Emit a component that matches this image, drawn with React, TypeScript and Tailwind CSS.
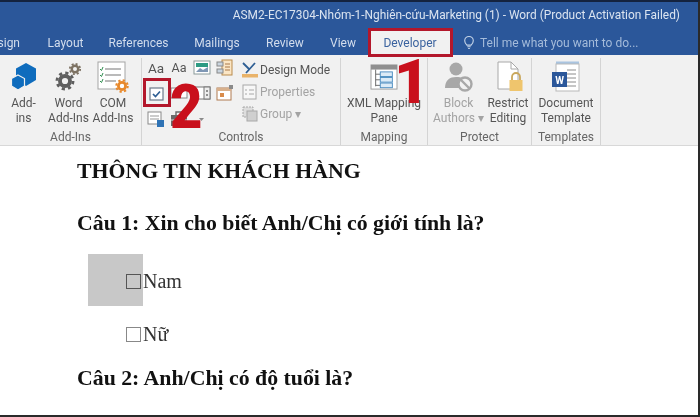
import type { ReactNode } from "react";

/* ─── Ribbon icons ─── */

function Gear({ x, y, r, color }: { x: number; y: number; r: number; color: string }) {
  const dash = (2 * Math.PI * r * 1.15) / 16;
  return (
    <g fill="none" stroke={color}>
      <circle cx={x} cy={y} r={r * 0.72} strokeWidth={r * 0.55} />
      <circle cx={x} cy={y} r={r * 1.15} strokeWidth={r * 0.4} strokeDasharray={`${dash} ${dash}`} />
    </g>
  );
}

function AddInsIcon() {
  return (
    <svg width="32" height="32" viewBox="0 0 32 32">
      <path d="M18 3l10 5.5v11.5L18 26 8 20V8.500z" fill="#0f6cbd" />
      <path d="M10 15l6.500 3.500v7.500L10 30 3.500 26v-7.500z" fill="#0f6cbd" stroke="#f1f1f1" strokeWidth="1.2" />
    </svg>
  );
}

function WordAddInsIcon() {
  return (
    <svg width="32" height="32" viewBox="0 0 32 32">
      <Gear x={22} y={9} r={4.5} color="#7d7263" />
      <Gear x={12} y={21} r={7} color="#5f5f5f" />
    </svg>
  );
}

function ComAddInsIcon() {
  return (
    <svg width="36" height="34" viewBox="0 0 36 34">
      <g transform="translate(2 1)">
        <rect x="1" y="1" width="27" height="27" fill="#fff" stroke="#a5a5a5" />
        <path d="M8 8h16M8 14h16M8 20h11" stroke="#777" strokeWidth="1.2" />
        <path d="M3 8l1.500 1.500L6 6M3 14l1.500 1.500L6 12M3 20l1.500 1.500L6 18" stroke="#2f8f4f" fill="none" />
        <Gear x={25} y={25} r={5} color="#e8892c" />
      </g>
    </svg>
  );
}

function XmlIcon() {
  return (
    <svg width="28" height="26" viewBox="0 0 30 28" className="mt-[4px]">
      <rect x="1" y="1" width="28" height="26" fill="#fff" stroke="#9a9a9a" />
      <rect x="1" y="1" width="28" height="5" fill="#8f8f8f" />
      <path d="M6 6v18M6 11h5M6 17h5M6 23h5" stroke="#666" fill="none" />
      <rect x="11" y="8.500" width="13" height="5" fill="#dcebf7" stroke="#4b8cc0" />
      <rect x="11" y="14.500" width="13" height="5" fill="#dcebf7" stroke="#4b8cc0" />
      <rect x="11" y="20.500" width="13" height="5" fill="#dcebf7" stroke="#4b8cc0" />
    </svg>
  );
}

function BlockIcon() {
  return (
    <svg width="32" height="32" viewBox="0 0 32 32">
      <circle cx="13" cy="9" r="6.500" fill="#a8a8a8" />
      <path d="M2 28c0-8 5-11 11-11s9 2 10 4l-6 7z" fill="#a8a8a8" />
      <circle cx="22" cy="24" r="6.500" fill="#f1f1f1" stroke="#a8a8a8" strokeWidth="2.400" />
      <path d="M17.500 19.500l9 9" stroke="#a8a8a8" strokeWidth="2.400" />
    </svg>
  );
}

function RestrictIcon() {
  return (
    <svg width="30" height="32" viewBox="0 0 30 32" className="ml-[6px]">
      <path d="M2 2h13l7 7v20H2z" fill="#fff" stroke="#a8a8a8" />
      <path d="M15 2v7h7" fill="none" stroke="#a8a8a8" />
      <path d="M16 20v-3a4 4 0 0 1 8 0v3" fill="none" stroke="#c9a75c" strokeWidth="1.800" />
      <rect x="13.500" y="20" width="13" height="11" fill="#efc56d" />
    </svg>
  );
}

function TemplateIcon() {
  return (
    <svg width="28" height="32" viewBox="0 0 28 32">
      <rect x="4" y="1.500" width="23" height="4" fill="#a9c4e0" />
      <rect x="4" y="4" width="23" height="27" fill="#fff" stroke="#b9b9b9" />
      <path d="M15 10h9M15 14h9M15 18h9M15 22h9M15 26h9" stroke="#8c8c8c" />
      <rect x="0" y="12" width="15" height="15" fill="#2b579a" />
      <text x="7.500" y="23.500" textAnchor="middle" fontSize="10" fontWeight="700" fill="#fff" fontFamily="Roboto, sans-serif">W</text>
    </svg>
  );
}

function Mini({ children }: { children: ReactNode }) {
  return <svg width="18" height="18" viewBox="0 0 18 18">{children}</svg>;
}

/* ─── Ribbon parts ─── */

function BigButton({ icon, lines, width, muted }: { icon: ReactNode; lines: string[]; width: string; muted?: boolean }) {
  return (
    <div className={`flex shrink-0 flex-col items-center ${width}`}>
      <div className="flex h-[36px] items-start justify-center pt-[2px]">{icon}</div>
      <div className={`mt-[2px] text-center leading-[15px] whitespace-nowrap ${muted ? "text-[#a3a3a3]" : "text-[#555]"}`}>
        {lines.map((l) => (
          <div key={l}>{l}</div>
        ))}
      </div>
    </div>
  );
}

function Group({ label, width, children }: { label: string; width: string; children: ReactNode }) {
  return (
    <div className={`flex shrink-0 flex-col border-r border-[#d4d4d4] ${width}`}>
      <div className="flex flex-1 justify-start">{children}</div>
      <div className="text-center leading-[15px] text-[#666]">{label}</div>
    </div>
  );
}

function Tab({ label, width }: { label: string; width: string }) {
  return <div className={`shrink-0 text-center ${width}`}>{label}</div>;
}

function ControlRow({ icon, label, muted }: { icon: ReactNode; label: string; muted?: boolean }) {
  return (
    <div className={`flex h-[22px] items-center gap-[1px] whitespace-nowrap ${muted ? "text-[#a3a3a3]" : "text-[#555]"}`}>
      {icon}
      <span>{label}</span>
    </div>
  );
}

function ControlsGrid() {
  return (
    <div className="ml-[5px] grid w-[88px] grid-cols-4 grid-rows-3 gap-x-[4px] gap-y-[5px] pt-[1px]">
      <span className="flex h-[18px] w-[18px] items-center justify-center text-[13.5px] text-[#555]">Aa</span>
      <span className="flex h-[18px] w-[18px] items-center justify-center text-[12.5px] text-[#555]">Aa</span>
      <Mini>
        <rect x="1" y="2" width="16" height="13" fill="#fff" stroke="#8a9a9a" />
        <rect x="3" y="4" width="12" height="4" fill="#2d9b84" />
        <path d="M3 13l4-4 3 2 5-3v5H3z" fill="#7f97b5" />
      </Mini>
      <Mini>
        <rect x="6" y="1" width="10" height="15" fill="#fbe6c5" stroke="#b98b4c" />
        <rect x="1" y="3" width="6" height="4" fill="#c9d4de" stroke="#888" />
        <rect x="1" y="10" width="6" height="4" fill="#c9d4de" stroke="#888" />
        <path d="M9 5h5M9 8h5M9 11h5" stroke="#a9794a" />
      </Mini>
      <Mini>
        <g transform="translate(1 1)">
          <rect x="2" y="3" width="13" height="12" fill="#fff" stroke="#6d7a8a" strokeWidth="1.2" />
          <path d="M5 9l2.500 2.500L12 6.500" fill="none" stroke="#2f5f94" strokeWidth="1.7" />
        </g>
      </Mini>
      <Mini>
        <rect x="1" y="4" width="16" height="10" fill="#fff" stroke="#888" />
      </Mini>
      <Mini>
        <rect x="1" y="3" width="16" height="12" fill="#fff" stroke="#777" />
        <rect x="11" y="3" width="6" height="12" fill="#eee" stroke="#777" />
        <path d="M13 7h2M13 11h2" stroke="#333" />
      </Mini>
      <Mini>
        <rect x="1" y="4" width="14" height="12" fill="#fff" stroke="#b07b50" />
        <rect x="1" y="4" width="14" height="3" fill="#d8b08c" />
        <rect x="4" y="9" width="4" height="4" fill="#d98b4a" />
        <rect x="13" y="1" width="4" height="4" fill="#8a8a8a" />
      </Mini>
      <Mini>
        <rect x="1" y="2" width="13" height="12" fill="#fff" stroke="#8a8a8a" />
        <path d="M3 6h9M3 9h9" stroke="#999" />
        <rect x="10" y="10" width="7" height="7" fill="#2f73b5" />
      </Mini>
      <Mini>
        <rect x="1" y="5" width="16" height="11" fill="#6a6a6a" />
        <path d="M6 5V2h6v3" fill="none" stroke="#6a6a6a" strokeWidth="1.4" />
        <path d="M1 10h16" stroke="#ddd" />
      </Mini>
      <Mini>
        <path d="M6 8h5l-2.500 3z" fill="#8a8a8a" />
      </Mini>
    </div>
  );
}

function ControlsOptions() {
  return (
    <div className="ml-[6px] w-[90px] pt-[1px]">
      <ControlRow
        label="Design Mode"
        icon={
          <Mini>
            <path d="M2 2l6 6M14 2L5 12" stroke="#2f5f94" strokeWidth="1.8" />
            <rect x="1" y="13" width="16" height="3.500" fill="#e9b36a" />
          </Mini>
        }
      />
      <ControlRow
        muted
        label="Properties"
        icon={
          <Mini>
            <rect x="2" y="2" width="13" height="14" fill="#f7f7f7" stroke="#a8a8a8" />
            <path d="M4 7h2M8 7h5M4 11h2M8 11h5" stroke="#a8a8a8" />
          </Mini>
        }
      />
      <ControlRow
        muted
        label="Group ▾"
        icon={
          <Mini>
            <rect x="2" y="2" width="10" height="10" fill="#ddd" stroke="#a8a8a8" strokeDasharray="2 1" />
            <rect x="6" y="6" width="10" height="10" fill="#cfcfcf" stroke="#a8a8a8" />
          </Mini>
        }
      />
    </div>
  );
}

function Ribbon() {
  return (
    <div className="flex h-[91px] shrink-0 border-b border-[#d8d8d8] bg-[#f1f1f1] pt-[3px] font-['Roboto',sans-serif] text-[12px]">
      <Group label="Add-Ins" width="w-[142px]">
        <BigButton icon={<AddInsIcon />} lines={["Add-", "ins"]} width="w-[47px]" />
        <BigButton icon={<WordAddInsIcon />} lines={["Word", "Add-Ins"]} width="w-[43px]" />
        <BigButton icon={<ComAddInsIcon />} lines={["COM", "Add-Ins"]} width="w-[46px]" />
      </Group>
      <Group label="Controls" width="w-[199px]">
        <ControlsGrid />
        <ControlsOptions />
      </Group>
      <Group label="Mapping" width="w-[87px]">
        <BigButton icon={<XmlIcon />} lines={["XML Mapping", "Pane"]} width="w-[86px]" />
      </Group>
      <Group label="Protect" width="w-[104px]">
        <div className="w-[3px] shrink-0" />
        <BigButton muted icon={<BlockIcon />} lines={["Block", "Authors ▾"]} width="w-[55px]" />
        <BigButton icon={<RestrictIcon />} lines={["Restrict", "Editing"]} width="w-[44px]" />
      </Group>
      <Group label="Templates" width="w-[69px]">
        <BigButton icon={<TemplateIcon />} lines={["Document", "Template"]} width="w-[68px]" />
      </Group>
    </div>
  );
}

function TitleBar() {
  return (
    <div className="bg-[#2b579a] font-['Roboto',sans-serif] text-[#dbe4f0]">
      <div className="flex h-[28px] items-center justify-end pr-[18px] text-[11.9px] whitespace-nowrap">
        ASM2-EC17304-Nhóm-1-Nghiên-cứu-Marketing (1) - Word (Product Activation Failed)
      </div>
      <div className="flex h-[25px] items-center text-[12px] text-[#d3dded]">
        <div className="flex w-[20px] shrink-0 justify-end overflow-hidden">Design</div>
        <div className="w-[14px] shrink-0" />
        <Tab label="Layout" width="w-[63px]" />
        <Tab label="References" width="w-[83px]" />
        <Tab label="Mailings" width="w-[74px]" />
        <Tab label="Review" width="w-[62px]" />
        <Tab label="View" width="w-[54px]" />
        <div className="flex h-[25px] w-[80px] shrink-0 items-center justify-center self-end bg-[#f1f1f1] text-[#3b639f]">Developer</div>
        <div className="ml-[13px] flex items-center gap-[5px] text-[#a4bbda]">
          <svg width="12" height="15" viewBox="0 0 14 16" fill="none" stroke="#c6d5e8" strokeWidth="1.3">
            <path d="M4.500 11C3 9.500 2 8.300 2 6a5 5 0 0 1 10 0c0 2.300-1 3.500-2.500 5z" />
            <path d="M5 13h4M6 15h2" />
          </svg>
          <span className="whitespace-nowrap">Tell me what you want to do...</span>
        </div>
      </div>
    </div>
  );
}

function CheckOption({ label, focused }: { label: string; focused?: boolean }) {
  return (
    <div className="relative flex items-center pl-[49px] font-['Liberation_Serif',serif] text-[20px] leading-[26px] font-normal text-[#333]">
      {focused && <div className="absolute top-[-14px] left-[11px] h-[52px] w-[55px] bg-[#c8c8c8]" />}
      <span className={`relative h-[15px] w-[15px] border ${focused ? "border-[#555]" : "border-[#888]"}`} />
      <span className="relative ml-[2px]">{label}</span>
    </div>
  );
}

function Document() {
  return (
    <div className="flex flex-1 flex-col bg-white pl-[77px] pt-[12px] font-['Liberation_Serif',serif] text-[21.8px] leading-[26px] font-bold text-[#111]">
      <div>THÔNG TIN KHÁCH HÀNG</div>
      <div className="mt-[26px]">Câu 1: Xin cho biết Anh/Chị có giới tính là?</div>
      <div className="mt-[32px]">
        <CheckOption label="Nam" focused />
      </div>
      <div className="mt-[27px]">
        <CheckOption label="Nữ" />
      </div>
      <div className="mt-[18px]">Câu 2: Anh/Chị có độ tuổi là?</div>
    </div>
  );
}

export default function App() {
  return (
    <div className="relative flex h-[417px] w-[700px] flex-col overflow-hidden border-t-2 border-r-2 border-b-2 border-t-[#14233f] border-r-[#2a2a2a] border-b-[#2a2a2a] bg-white blur-[0.45px]">
      <TitleBar />
      <Ribbon />
      <Document />

      {/* Red annotations */}
      <div className="absolute top-[26px] left-[368px] h-[29px] w-[85px] border-[3px] border-[#b3172b]" />
      <div className="absolute top-[76px] left-[143px] h-[29px] w-[28px] border-[3px] border-[#b3172b]" />
      <div className="absolute top-[44px] left-[394px] font-['Roboto',sans-serif] text-[61px] leading-[72px] font-black text-[#c9101c]">1</div>
      <div className="absolute top-[69px] left-[170px] origin-left scale-x-[0.92] font-['Roboto',sans-serif] text-[61px] leading-[72px] font-black text-[#c9101c]">2</div>
    </div>
  );
}
